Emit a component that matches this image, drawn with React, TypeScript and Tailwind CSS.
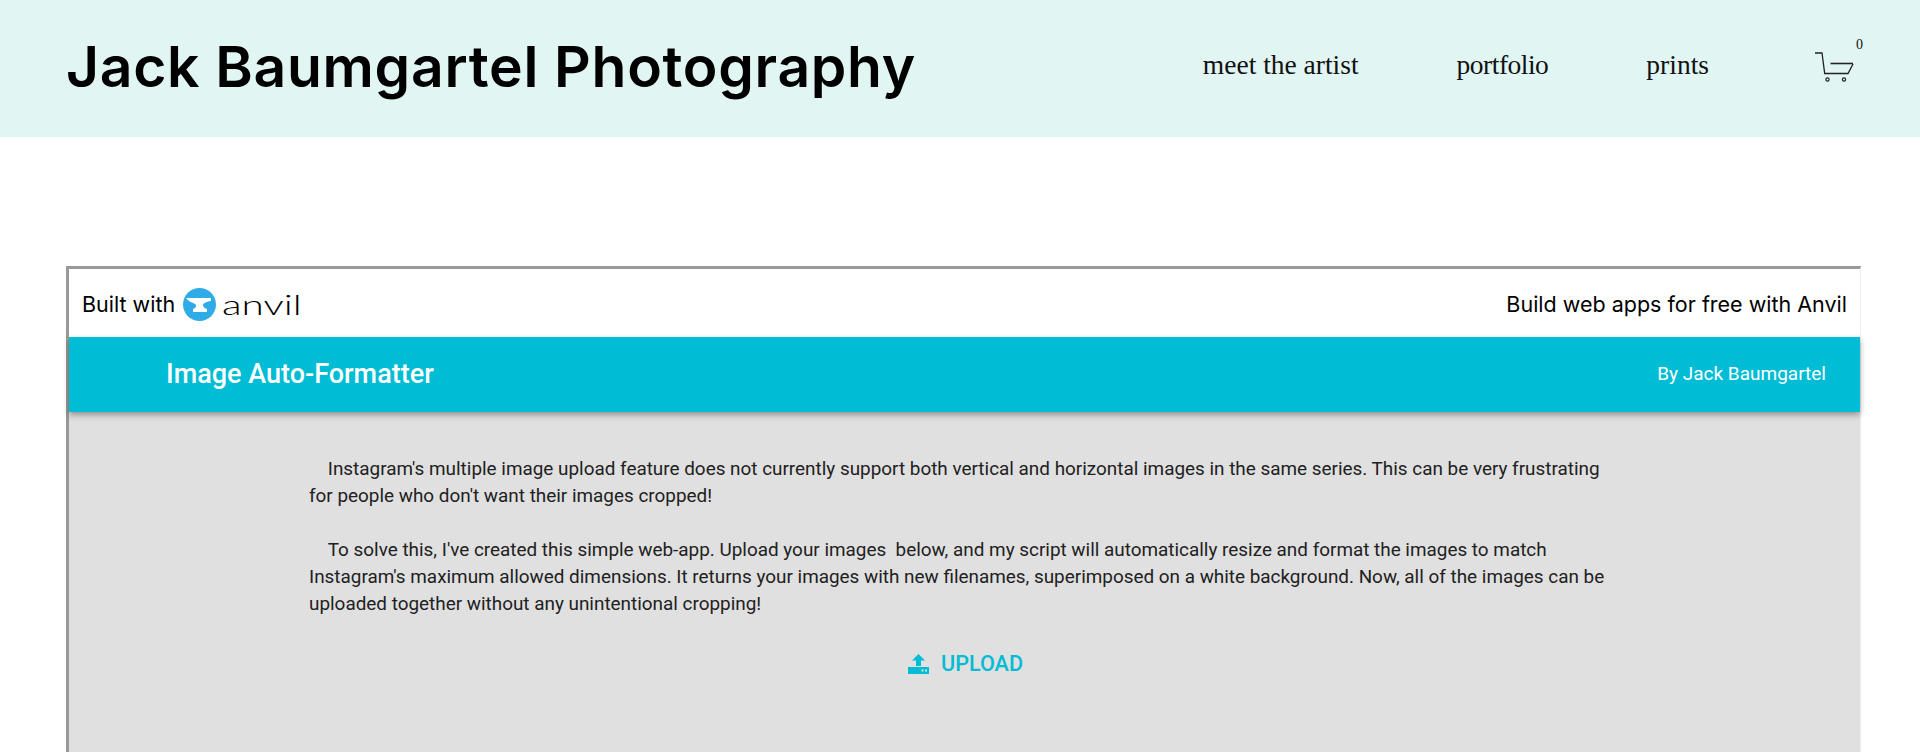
const CartIcon = () => (
  <svg width="39" height="30" viewBox="0 0 39 30" fill="none" stroke="#222" className="block">
    <path d="M0 1h7l2.7 20.5H33l5-9.5" strokeWidth="1.3" />
    <path d="M15.5 11.5H38" strokeWidth="1.6" />
    <circle cx="12.5" cy="27.5" r="1.6" strokeWidth="1.2" />
    <circle cx="29" cy="27.5" r="1.6" strokeWidth="1.2" />
  </svg>
);

const AnvilMark = () => (
  <svg width="33" height="33" viewBox="0 0 33 33" className="block shrink-0">
    <circle cx="16.5" cy="16.5" r="16.5" fill="#2fabe8" />
    <path
      d="M3 10H28V13C24 13.5 20.5 15 20 17 20 19 22 20.5 24 21V24H10V21C12 20.5 13.5 19 13 17 12 15 6 14.5 3 10z"
      fill="#fff"
    />
  </svg>
);

const UploadIcon = () => (
  <svg width="21" height="20" viewBox="0 0 21 20" fill="#00bcd4" className="block">
    <path d="M10.5 0 17 6.5h-4V12H8V6.5H4z" />
    <path d="M0 13h21v7H0z" />
    <rect x="13.5" y="15.5" width="2" height="2" fill="#e0e0e0" />
    <rect x="17" y="15.5" width="2" height="2" fill="#e0e0e0" />
  </svg>
);

export default function App() {
  return (
    <div className="h-[752px] overflow-hidden bg-white">
      {/* Site header */}
      <header className="flex h-[137px] items-center justify-between bg-[#e1f5f3] pb-[4px] pl-[66px] pr-[66px]">
        <h1 className="font-['Inter',sans-serif] text-[57px] font-semibold tracking-[0.7px] text-black">
          Jack Baumgartel Photography
        </h1>
        <nav className="mb-[4px] flex items-center font-['Liberation_Serif',serif] text-[27.5px] text-[#111]">
          <a className="mr-[98px]">meet the artist</a>
          <a className="mr-[98px] tracking-[-0.5px]">portfolio</a>
          <a className="mr-[106px]">prints</a>
          <div className="relative mt-[4px]">
            <CartIcon />
            <span className="absolute -top-[14px] -right-[9px] text-[14px] leading-none">0</span>
          </div>
        </nav>
      </header>

      {/* Embedded app */}
      <div className="ml-[66px] mr-[59px] mt-[129px] h-[500px] border-t-[3px] border-r border-l-[3px] border-[#999] border-r-[#eeeeee] font-['Roboto',sans-serif]">
        <div className="flex h-[68px] items-center justify-between bg-white pl-[13px] pr-[13px] pt-[2px] font-['Inter',sans-serif] text-[21.5px] text-black">
          <div className="flex items-center gap-[8px]">
            <span>Built with</span>
            <AnvilMark />
            <span className="-ml-[2px] w-[80px] origin-left scale-x-[1.5] font-['Lato',sans-serif] text-[27px] font-light leading-none">
              anvil
            </span>
          </div>
          <span>Build web apps for free with Anvil</span>
        </div>
        <div className="relative z-10 flex h-[75px] items-center justify-between bg-[#00bcd4] pl-[97px] pr-[34px] text-white shadow-[0_3px_6px_rgba(0,0,0,0.35)]">
          <span className="text-[27px] font-medium">Image Auto-Formatter</span>
          <span className="text-[19px]">By Jack Baumgartel</span>
        </div>
        <div className="h-full bg-[#e0e0e0] pl-[240px] pr-[242px] pt-[43px] text-[18.9px] leading-[27px] text-[#212121]">
          <p>
            &nbsp;&nbsp;&nbsp;&nbsp;Instagram's multiple image upload feature does not currently support both vertical and
            horizontal images in the same series. This can be very frustrating for people who don't want their images
            cropped!
          </p>
          <p className="mt-[27px]">
            &nbsp;&nbsp;&nbsp;&nbsp;To solve this, I've created this simple web-app. Upload your images&nbsp; below, and my
            script will automatically resize and format the images to match Instagram's maximum allowed dimensions. It
            returns your images with new filenames, superimposed on a white background. Now, all of the images can be
            uploaded together without any unintentional cropping!
          </p>
          <div className="flex justify-center pl-[4px] pt-[33px]">
            <button className="flex items-center gap-[12px] text-[21.6px] font-medium text-[#00bcd4]">
              <UploadIcon />
              UPLOAD
            </button>
          </div>
        </div>
      </div>
    </div>
  );
}
